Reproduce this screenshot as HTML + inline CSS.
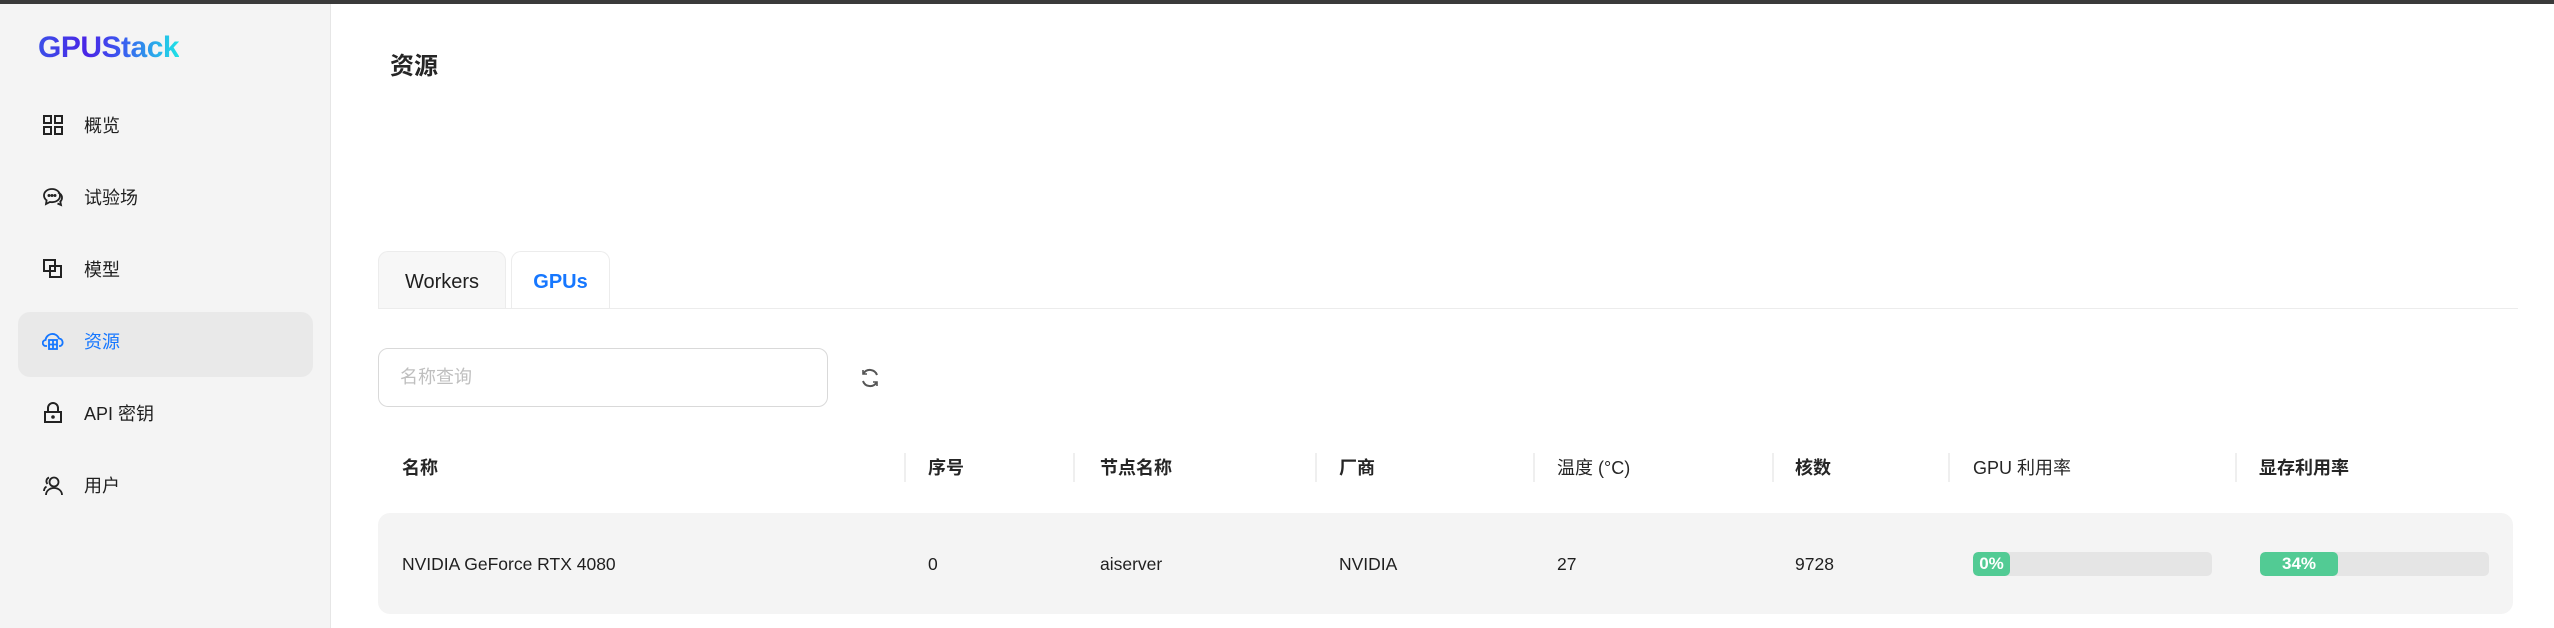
<!DOCTYPE html>
<html><head><meta charset="utf-8"><style>
*{margin:0;padding:0;box-sizing:border-box}
body{width:2554px;height:628px;overflow:hidden;background:#fff;font-family:"Liberation Sans","Noto Sans CJK SC",sans-serif;color:#1f1f1f;position:relative}
.top{position:absolute;left:0;top:0;width:2554px;height:4px;background:#3a3a3a}
.side{position:absolute;left:0;top:4px;width:331px;height:624px;background:#f4f4f4;border-right:1px solid #e6e6e6}
.logo{position:absolute;left:38px;top:27px;font-size:30px;font-weight:bold;letter-spacing:-0.5px;background:linear-gradient(90deg,#3b4fe8 0%,#4a25e6 35%,#3a5cf0 60%,#1fe3e6 100%);-webkit-background-clip:text;background-clip:text;color:transparent}
.mi{position:absolute;left:0;width:331px;height:40px;font-size:18px;display:flex;align-items:center}
.mi svg{position:absolute;left:42px;width:22px;height:22px}
.mi span{position:absolute;left:84px}
.sel{position:absolute;left:18px;top:308px;width:295px;height:65px;background:#e9e9e9;border-radius:12px}
.abs{position:absolute}
.th{position:absolute;top:456px;font-size:18px;font-weight:bold;color:#262626;line-height:24px}
.dv{position:absolute;top:453px;width:2px;height:29px;background:#efefef}
.td{position:absolute;top:552px;font-size:17.5px;line-height:24px;color:#1f1f1f}
.bar{position:absolute;top:552px;height:24px;background:#e5e5e5;border-radius:5px;overflow:hidden}
.bar i{display:block;height:24px;background:#52cb94;border-radius:5px;color:#fff;font-style:normal;font-weight:bold;font-size:17px;line-height:24px;text-align:center}
</style></head><body>
<div class="top"></div>
<div class="side">
<div class="logo">GPUStack</div>
<div class="sel"></div>
<div class="mi" style="top:101px"><svg viewBox="0 0 22 22" fill="none" stroke="#222" stroke-width="2"><rect x="2" y="2" width="7" height="7"/><rect x="13" y="2" width="7" height="7"/><rect x="2" y="13" width="7" height="7"/><rect x="13" y="13" width="7" height="7"/></svg><span>概览</span></div>
<div class="mi" style="top:173px"><svg viewBox="0 0 22 22" fill="none" stroke="#222" stroke-width="1.8"><path d="M10 3c-4.5 0-8 2.8-8 6.5 0 2 1 3.6 2.6 4.8L4 18l4-2c.7.2 1.3.2 2 .2 4.5 0 8-2.8 8-6.5S14.5 3 10 3z"/><path d="M16 6.5c2.5 1 4 3 4 5.3 0 1.5-.6 2.8-1.7 3.8L19 19l-3.5-1.5"/><circle cx="7" cy="9.5" r=".6" fill="#222"/><circle cx="10" cy="9.5" r=".6" fill="#222"/><circle cx="13" cy="9.5" r=".6" fill="#222"/></svg><span>试验场</span></div>
<div class="mi" style="top:245px"><svg viewBox="0 0 22 22" fill="none" stroke="#222" stroke-width="2"><rect x="2" y="2" width="11" height="11"/><rect x="8" y="8" width="11" height="11"/></svg><span>模型</span></div>
<div class="mi" style="top:317px;color:#1677ff"><svg viewBox="0 0 22 22" fill="none" stroke="#1677ff" stroke-width="1.8"><path d="M5 16H4a3 3 0 0 1-.5-6A7 7 0 0 1 17 8.5a4 4 0 0 1 1.5 7.5H17"/><rect x="7" y="10" width="8" height="9"/><path d="M7 14.5h8M11 10v9"/></svg><span>资源</span></div>
<div class="mi" style="top:389px"><svg viewBox="0 0 22 22" fill="none" stroke="#222" stroke-width="2"><rect x="3" y="10" width="16" height="10"/><path d="M6 10V6a5 5 0 0 1 10 0v4"/><circle cx="11" cy="15" r=".8" fill="#222"/></svg><span>API 密钥</span></div>
<div class="mi" style="top:461px"><svg viewBox="0 0 22 22" fill="none" stroke="#222" stroke-width="1.8"><circle cx="12" cy="8" r="4.5"/><path d="M4 21c0-4 3.5-7 8-7s8 3 8 7"/><path d="M7 3.5A4 4 0 0 0 5.5 10M2 17c0-2 1-3.5 2.5-4.5"/></svg><span>用户</span></div>
</div>
<div class="abs" style="left:390px;top:46px;font-size:24px;font-weight:bold;color:#262626">资源</div>
<div class="abs" style="left:378px;top:251px;width:128px;height:58px;background:#f7f7f7;border:1px solid #ececec;border-bottom:none;border-radius:10px 10px 0 0;font-size:20px;text-align:center;line-height:60px">Workers</div>
<div class="abs" style="left:511px;top:251px;width:99px;height:58px;background:#fff;border:1px solid #ececec;border-bottom:none;border-radius:10px 10px 0 0;font-size:20px;font-weight:bold;color:#1677ff;text-align:center;line-height:60px">GPUs</div>
<div class="abs" style="left:378px;top:308px;width:2140px;height:1px;background:#ececec"></div>
<div class="abs" style="left:378px;top:348px;width:450px;height:59px;border:1px solid #d9d9d9;border-radius:10px;font-size:18px;color:#bfbfbf;line-height:57px;padding-left:21px">名称查询</div>
<svg class="abs" style="left:858px;top:366px" width="24" height="24" viewBox="0 0 24 24" fill="none" stroke="#555" stroke-width="2"><path d="M19 9a7.5 7.5 0 0 0-13.5-1.5M5 15a7.5 7.5 0 0 0 13.5 1.5"/><path d="M5 4v4h4M19 20v-4h-4" stroke-width="1.6"/></svg>
<div class="th" style="left:402px">名称</div>
<div class="th" style="left:928px">序号</div>
<div class="th" style="left:1100px">节点名称</div>
<div class="th" style="left:1339px">厂商</div>
<div class="th" style="left:1557px;font-weight:normal">温度 (°C)</div>
<div class="th" style="left:1795px">核数</div>
<div class="th" style="left:1973px;font-weight:normal">GPU 利用率</div>
<div class="th" style="left:2259px">显存利用率</div>
<div class="dv" style="left:904px"></div><div class="dv" style="left:1073px"></div><div class="dv" style="left:1315px"></div><div class="dv" style="left:1533px"></div><div class="dv" style="left:1772px"></div><div class="dv" style="left:1948px"></div><div class="dv" style="left:2235px"></div>
<div class="abs" style="left:378px;top:513px;width:2135px;height:101px;background:#f4f4f4;border-radius:12px"></div>
<div class="td" style="left:402px">NVIDIA GeForce RTX 4080</div>
<div class="td" style="left:928px">0</div>
<div class="td" style="left:1100px">aiserver</div>
<div class="td" style="left:1339px">NVIDIA</div>
<div class="td" style="left:1557px">27</div>
<div class="td" style="left:1795px">9728</div>
<div class="bar" style="left:1973px;width:239px"><i style="width:37px">0%</i></div>
<div class="bar" style="left:2260px;width:229px"><i style="width:78px">34%</i></div>
</body></html>
